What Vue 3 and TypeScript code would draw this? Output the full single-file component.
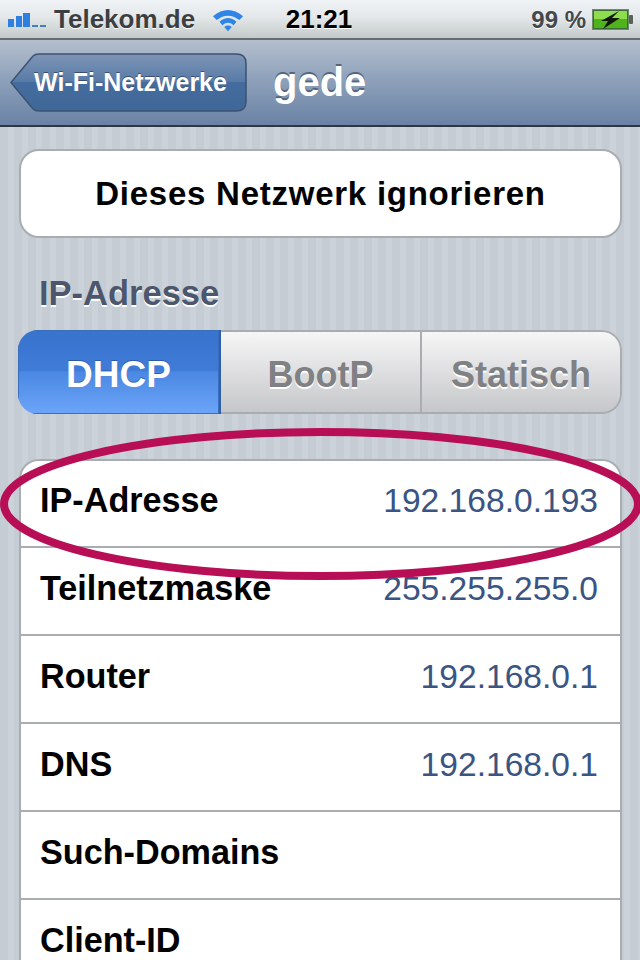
<script setup lang="ts">
const rows = [
  { label: "IP-Adresse", value: "192.168.0.193" },
  { label: "Teilnetzmaske", value: "255.255.255.0" },
  { label: "Router", value: "192.168.0.1" },
  { label: "DNS", value: "192.168.0.1" },
  { label: "Such-Domains", value: "" },
  { label: "Client-ID", value: "" }
]
</script>

<template>
  <div class="screen">
    <div class="status">
      <div class="status-left">
        <svg class="signal" width="39" height="16" viewBox="0 0 39 16">
          <rect x="0" y="7" width="6" height="8" fill="#2f7fe0" />
          <rect x="8" y="4" width="6" height="11" fill="#2f7fe0" />
          <rect x="15" y="1" width="7" height="14" fill="#2f7fe0" />
          <rect x="24" y="13" width="6" height="2" fill="#3f7fc8" />
          <rect x="32" y="13" width="6" height="2" fill="#3f7fc8" />
        </svg>
        <span class="carrier">Telekom.de</span>
        <svg class="wifi" width="32" height="25" viewBox="0 0 34 25">
          <path d="M1 9 Q17 -4 33 9 L29 13 Q17 4 5 13 Z" fill="#2f85e6" />
          <path d="M8 15 Q17 7 26 15 L23 18.500 Q17 13.500 11 18.500 Z" fill="#2f85e6" />
          <path d="M13 20.500 Q17 17.500 21 20.500 L17 25 Z" fill="#2f85e6" />
        </svg>
      </div>
      <span class="clock">21:21</span>
      <div class="status-right">
        <span class="battery-text">99 %</span>
        <svg width="42" height="22" viewBox="0 0 42 22">
          <rect x="0.500" y="0.500" width="36" height="20" fill="#3d6b3a" stroke="#6f8a6e" />
          <rect x="2" y="2" width="33" height="17" fill="#4fb41c" />
          <rect x="2" y="2" width="33" height="8" fill="#8fdc4f" />
          <rect x="37" y="6" width="4" height="9" rx="1" fill="#59625a" />
          <path d="M27 2 L9 12 L16 12 L11 20 L28 9 L20 9 Z" fill="#10180c" />
        </svg>
      </div>
    </div>

    <div class="navbar">
      <div class="back">
        <svg class="back-shape" width="237" height="60" viewBox="0 0 237 60">
          <defs>
            <linearGradient id="backFill" x1="0" y1="0" x2="0" y2="1">
              <stop offset="0" stop-color="#7d95b6" />
              <stop offset="0.5" stop-color="#577aa6" />
              <stop offset="0.5" stop-color="#446c9e" />
              <stop offset="1" stop-color="#3f6898" />
            </linearGradient>
          </defs>
          <path
            d="M1 29.500 L23 3 Q25 1 29 1 L226 1 Q236 1 236 10 L236 49 Q236 58 226 58 L29 58 Q25 58 23 56 Z"
            fill="url(#backFill)"
            stroke="#3b5271"
            stroke-width="1.500"
          />
        </svg>
        <span class="back-label">Wi-Fi-Netzwerke</span>
      </div>
      <span class="nav-title">gede</span>
    </div>

    <div class="content">
      <div class="action">Dieses Netzwerk ignorieren</div>
      <div class="section-title">IP-Adresse</div>
      <div class="segments">
        <div class="segment active">DHCP</div>
        <div class="segment">BootP</div>
        <div class="segment">Statisch</div>
      </div>
      <div class="group">
        <div v-for="row in rows" :key="row.label" class="row">
          <span class="row-label">{{ row.label }}</span>
          <span class="row-value">{{ row.value }}</span>
        </div>
      </div>
    </div>

    <svg class="ring" width="640" height="160" viewBox="0 0 640 160">
      <ellipse cx="321" cy="76" rx="317" ry="72" fill="none" stroke="#b70e56" stroke-width="8" />
    </svg>
  </div>
</template>

<style>
html,
body {
  margin: 0;
  background: #c5ccd4;
}
</style>

<style scoped>
.screen {
  position: relative;
  width: 640px;
  height: 960px;
  overflow: hidden;
  font-family: "Liberation Sans", Arial, sans-serif;
  background: repeating-linear-gradient(90deg, #c5ccd4 0 8px, #cbd2d9 8px 14px);
}
.status {
  height: 40px;
  box-sizing: border-box;
  display: grid;
  grid-template-columns: 1fr auto 1fr;
  align-items: center;
  padding: 1px 6px 0 8px;
  background: linear-gradient(#eff3f6, #e4e8ea 45%, #c4c9ca);
  border-bottom: 2px solid #666c72;
}
.status-left,
.status-right {
  display: flex;
  align-items: center;
}
.status-right {
  justify-content: flex-end;
  gap: 6px;
}
.signal {
  margin-right: 7px;
}
.carrier {
  font-size: 26px;
  font-weight: bold;
  color: #3c3f42;
  text-shadow: 0 1px 0 #fff;
}
.wifi {
  margin-left: 17px;
}
.clock {
  font-size: 26px;
  font-weight: bold;
  color: #000;
  text-shadow: 0 1px 0 #fff;
  margin-left: -4px;
}
.battery-text {
  font-size: 24px;
  font-weight: bold;
  color: #45484b;
  text-shadow: 0 1px 0 #fff;
}
.navbar {
  height: 87px;
  box-sizing: border-box;
  display: flex;
  align-items: center;
  gap: 26px;
  padding-left: 10px;
  background: linear-gradient(#b4bfce, #8fa2bb 45%, #6a82a4);
  border-bottom: 2px solid #2d3642;
}
.back {
  position: relative;
  width: 237px;
  height: 60px;
  display: flex;
  align-items: center;
  justify-content: center;
  box-sizing: border-box;
}
.back-shape {
  position: absolute;
  left: 0;
  top: 0;
}
.back-label {
  position: relative;
  font-size: 25px;
  font-weight: bold;
  color: #fff;
  text-shadow: 0 -1px 0 #3a5070;
  margin-left: 4px;
}
.nav-title {
  font-size: 40px;
  font-weight: bold;
  color: #fff;
  text-shadow: 0 -2px 0 #56667e;
}
.content {
  padding: 22px 18px 0 19px;
}
.action {
  height: 89px;
  box-sizing: border-box;
  display: flex;
  align-items: center;
  justify-content: center;
  background: #fff;
  border: 2px solid #a9adb2;
  border-radius: 20px;
  font-size: 33px;
  font-weight: bold;
  letter-spacing: 0.75px;
  color: #000;
}
.section-title {
  margin: 35px 0 0 20px;
  font-size: 34.500px;
  line-height: 40px;
  font-weight: bold;
  color: #4c566c;
  text-shadow: 0 2px 0 #fff;
}
.segments {
  margin: 17px 0 0 -1px;
  height: 84px;
  display: grid;
  grid-template-columns: 203px 201px 200px;
  border-radius: 20px;
  overflow: hidden;
}
.segment {
  display: flex;
  align-items: center;
  justify-content: center;
  box-sizing: border-box;
  padding-top: 5px;
  font-size: 36px;
  font-weight: bold;
  color: #7f8184;
  text-shadow: 0 2px 0 #fff;
  background: linear-gradient(#f6f6f7, #c6c7c9);
  border: 2px solid #a9adb2;
  border-left: 0;
}
.segment.active {
  color: #fff;
  font-size: 37px;
  text-shadow: 0 -1px 0 #2b5ca8;
  background: linear-gradient(#3873cd, #3f7cd8 48%, #4b88e3 50%, #6ca5f9);
  border: 0;
  border-right: 2px solid #2f5fa8;
  box-shadow: inset 0 0 0 1px #3a6fbe;
}
.segment:last-child {
  border-radius: 0 20px 20px 0;
}
.group {
  margin-top: 45px;
  background: #fff;
  border: 2px solid #a9adb2;
  border-bottom: 0;
  border-radius: 20px 20px 0 0;
}
.row {
  height: 88px;
  box-sizing: border-box;
  display: flex;
  align-items: center;
  justify-content: space-between;
  padding: 0 22px 5px 19px;
  border-bottom: 2px solid #a9adb2;
}
.row:first-child {
  height: 87px;
  padding-bottom: 6px;
}
.row-label {
  font-size: 34.200px;
  font-weight: bold;
  color: #000;
}
.row-value {
  font-size: 33.600px;
  color: #3a5483;
}
.ring {
  position: absolute;
  left: 0;
  top: 428px;
}
</style>
